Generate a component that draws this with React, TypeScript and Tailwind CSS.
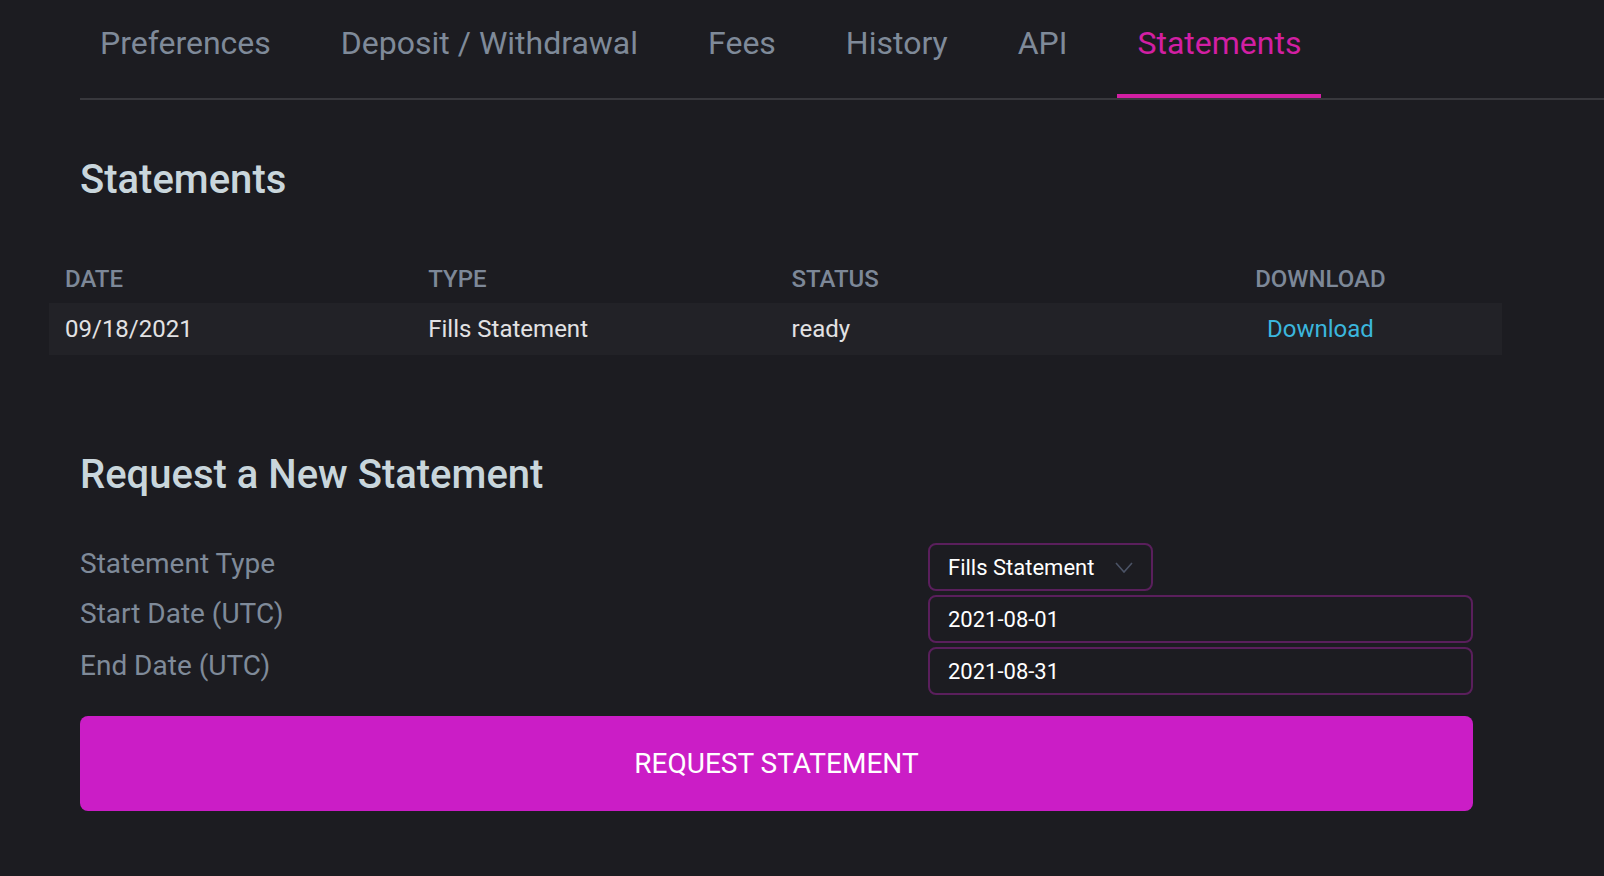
const tabs = ["Preferences", "Deposit / Withdrawal", "Fees", "History", "API", "Statements"];

const rows = [{ date: "09/18/2021", type: "Fills Statement", status: "ready" }];

function Chevron() {
  return (
    <svg width="18" height="11" viewBox="0 0 18 11" fill="none" className="ml-auto">
      <path d="M1 1l8 9 8-9" stroke="#4b5366" strokeWidth="1.6" />
    </svg>
  );
}

export default function App() {
  const active = "Statements";

  return (
    <div className="min-h-[876px] w-full bg-[#1c1c21] font-['Roboto',sans-serif]">
      <nav className="ml-[80px] flex h-[100px] gap-[30px] border-b-2 border-[#38383d]">
        {tabs.map((tab) => (
          <button
            key={tab}
            type="button"
            className={`-mb-[2px] flex h-[98px] items-center border-b-4 px-5 pb-[8px] text-[32px] ${
              tab === active ? "border-[#d21fa3] text-[#d21fa3]" : "border-transparent text-[#7f8a99]"
            }`}
          >
            {tab}
          </button>
        ))}
      </nav>

      <h1 className="ml-[80px] mt-[57px] text-[40px] font-medium leading-[46px] text-[#c9d6dc]">Statements</h1>

      <table className="ml-[49px] mt-[52px] w-[1453px] table-fixed">
        <thead>
          <tr className="h-[48px] text-[24px] uppercase text-[#7d8898]">
            <th className="pl-4 text-left font-medium">Date</th>
            <th className="pl-4 text-left font-medium">Type</th>
            <th className="pl-4 text-left font-medium">Status</th>
            <th className="text-center font-medium">Download</th>
          </tr>
        </thead>
        <tbody>
          {rows.map((row) => (
            <tr key={row.date} className="h-[52px] bg-[#222227] text-[24px] text-[#e2e2e4]">
              <td className="pl-4">{row.date}</td>
              <td className="pl-4">{row.type}</td>
              <td className="pl-4">{row.status}</td>
              <td className="text-center">
                <a className="text-[#3bb6dd]">Download</a>
              </td>
            </tr>
          ))}
        </tbody>
      </table>

      <div className="ml-[80px] w-[1393px]">
        <h2 className="mt-[97px] text-[40px] font-medium leading-[46px] text-[#c9d6dc]">Request a New Statement</h2>

        <div className="mt-[45px] grid grid-cols-[848px_1fr] gap-y-[4px] text-[28px] text-[#7f8a99]">
          <label className="-mt-[2px] leading-[46px]">Statement Type</label>
          <div>
            <div className="flex h-[48px] w-[225px] items-center rounded-lg border-2 border-[#5a1f5c] px-[18px] text-[22px] text-white">
              Fills Statement
              <Chevron />
            </div>
          </div>
          <label className="-mt-[4px] leading-[46px]">Start Date (UTC)</label>
          <input
            readOnly
            value="2021-08-01"
            className="h-[48px] rounded-lg border-2 border-[#5a1f5c] bg-transparent px-[18px] text-[22px] text-white outline-none"
          />
          <label className="-mt-[4px] leading-[46px]">End Date (UTC)</label>
          <input
            readOnly
            value="2021-08-31"
            className="h-[48px] rounded-lg border-2 border-[#5a1f5c] bg-transparent px-[18px] text-[22px] text-white outline-none"
          />
        </div>

        <button
          type="button"
          className="mt-[21px] h-[95px] w-full rounded-lg bg-[#cb1dc6] text-[28px] uppercase text-white"
        >
          Request Statement
        </button>
      </div>
    </div>
  );
}
